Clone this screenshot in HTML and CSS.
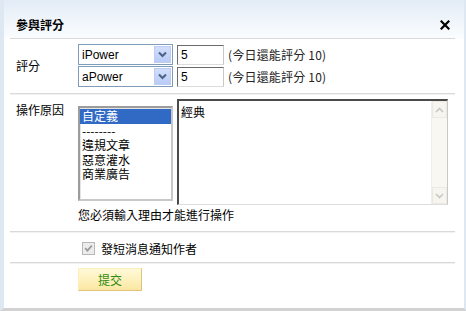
FILE: index.html
```html
<!DOCTYPE html>
<html lang="zh-Hant">
<head>
<meta charset="utf-8">
<title>參與評分</title>
<link rel="stylesheet" href="styles.css">
</head>
<body>
<div class="win">
  <div class="titlebar">
    <div class="title-inner">
      <span class="title">參與評分</span>
      <svg class="close" width="10" height="10" viewBox="0 0 10 10"><path d="M1.5 1.5L8.5 8.5M8.5 1.5L1.5 8.5" stroke="#000" stroke-width="2.2" stroke-linecap="square"/></svg>
    </div>
  </div>
  <div class="content">
    <div class="row row-score">
      <div class="label mid">評分</div>
      <div class="lines">
        <div class="line">
          <div class="select"><span class="sel-text">iPower</span><span class="sel-btn"><svg width="9" height="7" viewBox="0 0 9 7"><path d="M1 1.5L4.5 5L8 1.5" fill="none" stroke="#4d6185" stroke-width="2"/></svg></span></div>
          <div class="input">5</div>
          <span class="note">(今日還能評分 10)</span>
        </div>
        <div class="line">
          <div class="select"><span class="sel-text">aPower</span><span class="sel-btn"><svg width="9" height="7" viewBox="0 0 9 7"><path d="M1 1.5L4.5 5L8 1.5" fill="none" stroke="#4d6185" stroke-width="2"/></svg></span></div>
          <div class="input">5</div>
          <span class="note">(今日還能評分 10)</span>
        </div>
      </div>
    </div>
    <div class="row row-reason">
      <div class="label top">操作原因</div>
      <div class="reason">
        <div class="reason-controls">
          <div class="listbox">
            <div class="opt selected">自定義</div>
            <div class="opt">--------</div>
            <div class="opt">違規文章</div>
            <div class="opt">惡意灌水</div>
            <div class="opt">商業廣告</div>
          </div>
          <div class="textarea">
            <div class="ta-text">經典</div>
            <div class="scrollbar">
              <div class="sb-btn"><svg width="9" height="6" viewBox="0 0 9 6"><path d="M1 5L4.5 1.5L8 5" fill="none" stroke="#c8c8c0" stroke-width="1.6"/></svg></div>
              <div class="sb-track"></div>
              <div class="sb-btn"><svg width="9" height="6" viewBox="0 0 9 6"><path d="M1 1L4.5 4.5L8 1" fill="none" stroke="#c8c8c0" stroke-width="1.6"/></svg></div>
            </div>
          </div>
        </div>
        <div class="hint">您必須輸入理由才能進行操作</div>
      </div>
    </div>
    <div class="row row-check">
      <div class="label"></div>
      <label class="check">
        <span class="cbox"><svg width="9" height="9" viewBox="0 0 9 9"><path d="M1.2 4.2L3.4 6.6L7.8 1.6" fill="none" stroke="#9a9a9a" stroke-width="1.8"/></svg></span>
        <span>發短消息通知作者</span>
      </label>
    </div>
    <div class="row row-submit">
      <div class="label"></div>
      <button class="submit" type="button">提交</button>
    </div>
  </div>
</div>
</body>
</html>
```
FILE: styles.css
```css
* { box-sizing: border-box; }
html, body { margin: 0; padding: 0; }
body {
  width: 466px;
  height: 311px;
  overflow: hidden;
  background: #fff;
  font-family: "Liberation Sans", "Noto Sans CJK TC", sans-serif;
  font-size: 12px;
  color: #000;
}
.win {
  width: 466px;
  height: 311px;
  border-left: 4px solid #dde8f3;
  border-right: 2px solid #dde8f3;
  border-bottom: 3px solid #d2d2d2;
  background: #fff;
  display: flex;
  flex-direction: column;
}
.titlebar {
  height: 39px;
  background: linear-gradient(#e2ecf6, #f4f8fc 70%, #fbfdfe);
  padding: 0 9px 0 6px;
}
.title-inner {
  height: 39px;
  border-bottom: 1px solid #d9d9d9;
  display: flex;
  align-items: center;
  justify-content: space-between;
  padding: 10px 5px 0 6px;
}
.title {
  font-family: "Noto Sans CJK TC", sans-serif;
  font-weight: bold;
  font-size: 12px;
  letter-spacing: 0;
}
.close { display: block; margin-top: 1px; }
.content {
  padding: 0 9px 0 6px;
  flex: 1;
}
.row {
  display: flex;
  border-bottom: 1px solid #d9d9d9;
  box-shadow: 0 1px 0 #f2f2f2;
}
.label {
  width: 68px;
  flex: none;
  padding-left: 6px;
  font-family: "Noto Sans CJK TC", sans-serif;
  line-height: 14px;
}
.label.mid { align-self: center; margin-top: 1px; }
.label.top { padding-top: 4px; }
.row-score { padding: 5px 0 6px; }
.lines { display: flex; flex-direction: column; gap: 1px; }
.line { display: flex; align-items: center; height: 21px; }
.select {
  width: 95px;
  height: 21px;
  border: 1px solid #7f9db9;
  display: flex;
  align-items: center;
  background: #fff;
}
.sel-text { flex: 1; padding-left: 3px; font-size: 12px; line-height: 14px; }
.sel-btn {
  width: 17px;
  height: 17px;
  margin-right: 1px;
  background: linear-gradient(#d2defb, #b9ccf7);
  border: 1px solid #bccdf3;
  display: flex;
  align-items: center;
  justify-content: center;
}
.sel-btn svg { display: block; }
.input {
  width: 47px;
  height: 20px;
  margin-left: 4px;
  border-top: 1px solid #6b6b6b;
  border-left: 1px solid #6b6b6b;
  border-right: 1px solid #c8c8c8;
  border-bottom: 1px solid #dcdcdc;
  padding: 2px 3px;
  line-height: 15px;
  font-size: 12px;
}
.note {
  margin-left: 4px;
  font-family: "Noto Sans CJK TC", sans-serif;
  font-size: 12px;
  color: #222;
  letter-spacing: 0.2px;
}
.row-reason { padding: 5px 0 8px; }
.reason { display: flex; flex-direction: column; }
.reason-controls { display: flex; align-items: flex-start; }
.listbox {
  width: 95px;
  height: 95px;
  margin-top: 7px;
  border: 2px solid;
  border-color: #9c9c9c #c8c8c8 #c8c8c8 #9c9c9c;
  box-shadow: inset 1px 1px 0 #e4e4e4;
  padding-top: 1px;
  background: #fff;
  font-family: "Noto Sans CJK TC", sans-serif;
}
.opt {
  height: 14.5px;
  line-height: 14.5px;
  padding-left: 2px;
  white-space: nowrap;
}
.opt.selected { background: #316ac5; color: #fff; }
.textarea {
  width: 271px;
  height: 106px;
  margin-left: 4px;
  border-top: 2px solid #4a4a4a;
  border-left: 2px solid #4a4a4a;
  border-right: 1px solid #c8c8c8;
  border-bottom: 1px solid #dedede;
  display: flex;
  background: #fff;
}
.ta-text {
  flex: 1;
  padding: 4px 2px;
  line-height: 14px;
  font-family: "Noto Sans CJK TC", sans-serif;
}
.scrollbar {
  width: 16px;
  display: flex;
  flex-direction: column;
  background: #f8f7f2;
  border-left: 1px solid #f0efe8;
}
.sb-btn {
  height: 17px;
  border: 1px solid #ebeae2;
  background: #f6f5ef;
  display: flex;
  align-items: center;
  justify-content: center;
}
.sb-btn svg { display: block; }
.sb-track { flex: 1; }
.hint {
  margin-top: 2px;
  line-height: 16px;
  font-family: "Noto Sans CJK TC", sans-serif;
}
.row-check { height: 31px; padding-top: 3px; align-items: center; }
.check {
  display: flex;
  align-items: center;
  margin-left: 4px;
  font-family: "Noto Sans CJK TC", sans-serif;
}
.cbox {
  width: 13px;
  height: 13px;
  border: 1px solid #b8b8b8;
  background: #ececec;
  display: flex;
  align-items: center;
  justify-content: center;
  margin-right: 6px;
}
.cbox svg { display: block; }
.row-submit {
  border-bottom: none;
  box-shadow: none;
  padding-top: 5px;
}
.submit {
  width: 64px;
  height: 23px;
  border: 1px solid;
  border-color: #fbeec0 #e2c27a #e2c27a #fbeec0;
  background: linear-gradient(#fff9d8, #fdefb8 60%, #fbe7a2);
  color: #2e8b12;
  font-family: "Noto Sans CJK TC", sans-serif;
  font-size: 12px;
  padding: 0;
  margin: 0;
  cursor: pointer;
}
```
